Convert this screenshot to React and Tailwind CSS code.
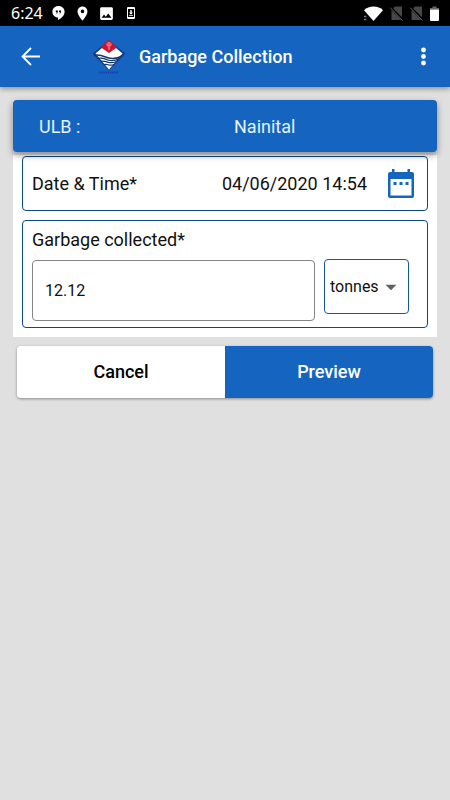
import React, { useState } from 'react';
import { MdPlace, MdImage, MdArrowDropDown } from 'react-icons/md';

const HangoutsIcon = () => (
  <svg width="13" height="14" viewBox="0 0 13 14" aria-hidden="true">
    <path d="M6.500 0C2.900 0 .4 2.600 .4 5.800s2.500 5.800 5.600 5.800V14c3.600-1.700 6.600-4.800 6.600-8.200C12.600 2.600 10.100 0 6.500 0z" fill="#fff" />
    <path d="M3.800 4.500h2V6L5 7.500h-.8L4.700 6h-.9zM7 4.500h2V6L8.200 7.500h-.8L7.900 6H7z" fill="#000" />
  </svg>
);

const DownloadIcon = () => (
  <svg width="8" height="12" viewBox="0 0 8 12" aria-hidden="true">
    <rect width="8" height="12" rx="1" fill="#fff" />
    <rect x="1" y="2" width="6" height="8" fill="#000" />
    <path d="M3.300 3h1.400v2.500h1.300L4 7.700 2 5.500h1.300zM2 8.200h4v.8H2z" fill="#fff" />
  </svg>
);

const WifiIcon = () => (
  <svg width="21" height="15" viewBox="0 0 21 15" aria-hidden="true">
    <path d="M10.500 15L1 4.200C3.500 1.800 7 .5 10.500 .5s7.500 1.300 9.500 3.700z" fill="#fff" />
    <path d="M1 10.500h3M1 13.500h3" stroke="#777" strokeWidth="1.300" strokeDasharray="2 .6" />
  </svg>
);

const NoSimIcon = () => (
  <svg width="14" height="15" viewBox="0 0 14 15" aria-hidden="true">
    <path d="M5 .5h7v13.500H1.500V4z" fill="#474747" />
    <path d="M.5 1.500l13 13" stroke="#000" strokeWidth="2.500" />
    <path d="M0 1.500l12.500 13" stroke="#606060" strokeWidth="1" />
  </svg>
);

const BatteryIcon = () => (
  <svg width="9" height="15" viewBox="0 0 9 15" aria-hidden="true">
    <path d="M2.500 .5h4V2H9v1.500H0V2h2.500z" fill="#666" />
    <path d="M0 3.500h9V14q0 1-1 1H1q-1 0-1-1z" fill="#fff" />
  </svg>
);

const BackIcon = () => (
  <svg width="27" height="27" viewBox="0 0 27 27" fill="none" stroke="currentColor" strokeWidth="1.800" aria-hidden="true">
    <path d="M23 13.500H6M14 5L5.500 13.500 14 22" />
  </svg>
);

const MoreIcon = () => (
  <svg width="27" height="27" viewBox="0 0 27 27" fill="currentColor" aria-hidden="true">
    <circle cx="13.500" cy="7" r="2.400" />
    <circle cx="13.500" cy="13.500" r="2.400" />
    <circle cx="13.500" cy="20" r="2.400" />
  </svg>
);

const CalendarIcon = () => (
  <svg width="36" height="36" viewBox="0 0 36 36" fill="currentColor" aria-hidden="true">
    <path fillRule="evenodd" d="M9 3h2.500v3h13V3H27v3h2q2 0 2 2v22q0 2-2 2H7q-2 0-2-2V8q0-2 2-2h2zM7.500 13V29.500h21V13z" />
    <path d="M10.500 16h3v3h-3zM16.500 16h3v3h-3zM22.500 16h3v3h-3z" />
  </svg>
);

const Logo = () => (
  <svg width="34" height="36" viewBox="0 0 34 36" role="img" aria-label="Logo">
    <path d="M17 1.500L33.500 14.500 17 31.500 .5 14.500z" fill="#123e8c" />
    <path d="M17 3L30.500 14.500 17 30.500 3.500 14.500z" fill="#fff" />
    <path d="M17 .500L25 8.500 20.500 11.500 17 14 13.500 11.500 9 8.500z" fill="#d3122b" />
    <path d="M14.500 4.500q2.500-3 5 0v2h-5zM15.500 6h3l-.5 5h-2z" fill="#f08a94" />
    <path d="M15 5h4M15 8h4M16 10h2" stroke="#c20f28" strokeWidth=".7" />
    <path d="M2 16.500c5-1.500 9 .5 13 2s9 2 16-2" fill="none" stroke="#15366f" strokeWidth="1.500" />
    <path d="M5 19.500c5-1.500 8 .5 11 1.500s7 1 12-1.500M8 22.500c4-1 7 .5 9 1s5 0 8-1M12 25.500c3-.7 4 .3 5 .5s4 0 5-.5" fill="none" stroke="#15366f" strokeWidth="1.200" />
    <path d="M7 33.500h20" stroke="#203db4" strokeWidth="1.800" strokeDasharray="1.500 .7" />
  </svg>
);

const App = () => {
  const [date, setDate] = useState('04/06/2020 14:54');
  const [amount, setAmount] = useState('12.12');
  const [unit, setUnit] = useState('tonnes');

  return (
    <div className="min-h-screen bg-[#e0e0e0] font-[Roboto,sans-serif] text-[#111]">
      <div className="flex h-[26px] items-center bg-black pl-[11px] pr-[11px] text-white">
        <span className="w-[41px] font-['Noto_Sans',sans-serif] text-base">6:24</span>
        <HangoutsIcon />
        <MdPlace size={17} className="ml-[9px]" />
        <MdImage size={17} className="ml-[7px]" />
        <span className="ml-[12px]"><DownloadIcon /></span>
        <div className="ml-auto flex items-center gap-[6px]">
          <WifiIcon />
          <NoSimIcon />
          <NoSimIcon />
          <BatteryIcon />
        </div>
      </div>

      <header className="flex h-[61px] items-center bg-[#1565c0] pl-[17px] pr-[13px] text-white shadow-[0_2px_5px_rgba(0,0,0,0.35)]">
        <button type="button" aria-label="Back">
          <BackIcon />
        </button>
        <div className="ml-12"><Logo /></div>
        <h1 className="ml-[13px] text-lg font-medium">Garbage Collection</h1>
        <button type="button" aria-label="More options" className="ml-auto">
          <MoreIcon />
        </button>
      </header>

      <main className="px-[13px] pt-[13px]">
        <div className="relative grid h-[52px] grid-cols-2 items-center rounded bg-[#1565c0] pt-0.5 pr-2 pl-[26px] text-lg text-[#e3f2fd] shadow-[0_3px_7px_rgba(0,0,0,0.4)]">
          <span>ULB :</span>
          <span>Nainital</span>
        </div>

        <form onSubmit={(e) => e.preventDefault()}>
          <div className="mt-[3px] bg-white px-[9px] pt-px pb-[9px]">
            <div className="flex h-[55px] items-center rounded border border-[#0d4787] pl-[9px] pr-2">
              <label htmlFor="date" className="text-lg">Date &amp; Time*</label>
              <input
                id="date"
                type="text"
                value={date}
                onChange={(e) => setDate(e.target.value)}
                className="ml-auto w-[150px] text-right text-lg outline-none"
              />
              <button type="button" aria-label="Pick date" className="ml-4 text-[#1565c0]">
                <CalendarIcon />
              </button>
            </div>

            <div className="mt-[9px] rounded border border-[#0d4787] pt-[5px] pr-[18px] pb-[6px] pl-[9px]">
              <label htmlFor="amount" className="block text-lg">Garbage collected*</label>
              <div className="mt-[5px] flex items-start gap-[9px]">
                <input
                  id="amount"
                  type="text"
                  inputMode="decimal"
                  value={amount}
                  onChange={(e) => setAmount(e.target.value)}
                  className="mt-px h-[61px] min-w-0 flex-1 rounded border border-[#858585] px-3 text-base outline-none"
                />
                <div className="relative w-[85px]">
                  <select
                    aria-label="Unit"
                    value={unit}
                    onChange={(e) => setUnit(e.target.value)}
                    className="h-[55px] w-full appearance-none rounded border border-[#1a5697] pl-[5px] text-base outline-none"
                  >
                    <option>tonnes</option>
                    <option>kg</option>
                  </select>
                  <MdArrowDropDown size={26} className="pointer-events-none absolute top-[15px] right-[5px] text-[#616161]" />
                </div>
              </div>
            </div>
          </div>

          <div className="mx-1 mt-[9px] grid h-[52px] grid-cols-2 rounded-sm text-lg font-medium shadow-[0_1px_3px_rgba(0,0,0,0.4)]">
            <button type="button" className="rounded-l-sm bg-white text-black">Cancel</button>
            <button type="submit" className="rounded-r-sm bg-[#1565c0] text-white">Preview</button>
          </div>
        </form>
      </main>
    </div>
  );
};

export default App;
